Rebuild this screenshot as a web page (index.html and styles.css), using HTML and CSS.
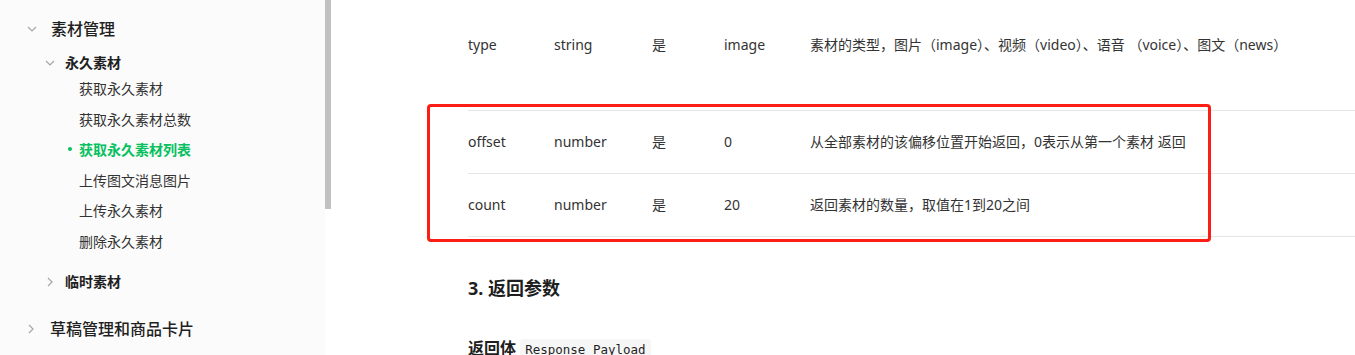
FILE: index.html
```html
<!DOCTYPE html>
<html lang="zh-CN">
<head>
  <meta charset="UTF-8" />
  <title>获取永久素材列表</title>
  <link rel="stylesheet" href="styles.css">
</head>
<body>
  <!-- Barra lateral de navegación -->
  <aside class="sidebar">
    <div class="group-title">
      <span class="chev"><svg width="10" height="6" viewBox="0 0 10 6"><polyline points="1,1 5,5 9,1" /></svg></span>
      素材管理
    </div>
    <div class="sub-title">
      <span class="chev"><svg width="10" height="6" viewBox="0 0 10 6"><polyline points="1,1 5,5 9,1" /></svg></span>
      永久素材
    </div>
    <ul class="items">
      <li>获取永久素材</li>
      <li>获取永久素材总数</li>
      <li class="active"><span class="dot"></span>获取永久素材列表</li>
      <li>上传图文消息图片</li>
      <li>上传永久素材</li>
      <li>删除永久素材</li>
    </ul>
    <div class="sub-title closed">
      <span class="chev"><svg width="6" height="10" viewBox="0 0 6 10"><polyline points="1,1 5,5 1,9" /></svg></span>
      临时素材
    </div>
    <div class="group-title closed">
      <span class="chev"><svg width="6" height="10" viewBox="0 0 6 10"><polyline points="1,1 5,5 1,9" /></svg></span>
      草稿管理和商品卡片
    </div>
  </aside>

  <!-- Barra de scroll -->
  <div class="scroll-track"><div class="scroll-thumb"></div></div>

  <!-- Contenido principal -->
  <main class="content">
    <div class="params">
      <div class="row first">
        <span>type</span><span>string</span><span>是</span><span>image</span>
        <span>素材的类型，图片（image）、视频（video）、语音 （voice）、图文（news）</span>
      </div>
      <div class="highlight">
        <div class="row">
          <span>offset</span><span>number</span><span>是</span><span>0</span>
          <span>从全部素材的该偏移位置开始返回，0表示从第一个素材 返回</span>
        </div>
        <div class="row">
          <span>count</span><span>number</span><span>是</span><span>20</span>
          <span>返回素材的数量，取值在1到20之间</span>
        </div>
      </div>
    </div>

    <h3 class="section-title">3. 返回参数</h3>
    <h4 class="sub-heading">返回体 <code>Response Payload</code></h4>
  </main>
</body>
</html>
```

FILE: styles.css
```css
/* Fuentes y colores base */
:root {
  --text: #333;
  --title: #1f1f1f;
  --line: #e6e6e6;
  --green: #07c160;
  --red: #fa1e14;
  --font-sans: "Noto Sans", "Noto Sans CJK SC", sans-serif;
}

html, body {
  margin: 0;
  height: 100%;
}
body {
  display: flex;
  overflow: hidden;
  background: #fff;
  color: var(--text);
  font-family: var(--font-sans);
}

/* Sidebar */
.sidebar {
  width: 325px;
  flex-shrink: 0;
  background: #fbfbfb;
  padding-top: 17px;
  box-sizing: border-box;
}
.chev {
  display: inline-flex;
  justify-content: center;
  align-items: center;
  width: 16px;
}
.chev polyline {
  fill: none;
  stroke: #a6a6a6;
  stroke-width: 1.2;
}
.group-title {
  display: flex;
  align-items: center;
  padding-left: 24px;
  font-size: 16px;
  line-height: 24px;
  font-weight: 500;
  color: var(--title);
}
.group-title .chev {
  margin-right: 11px;
}
.group-title.closed {
  margin-top: 24px;
  padding-left: 23px;
}
.sub-title {
  display: flex;
  align-items: center;
  margin-top: 11px;
  padding-left: 42px;
  font-size: 14px;
  line-height: 22px;
  font-weight: 700;
  color: var(--title);
}
.sub-title .chev {
  margin-right: 7px;
}
.sub-title.closed {
  margin-top: 15px;
}
.items {
  list-style: none;
  margin: -1px 0 0;
  padding: 0;
}
.items li {
  display: flex;
  align-items: center;
  height: 30.5px;
  padding-left: 79px;
  font-size: 14px;
  color: var(--text);
}
.items li.active {
  color: var(--green);
  font-weight: 700;
}
.dot {
  width: 4px;
  height: 4px;
  border-radius: 50%;
  background: var(--green);
  margin-left: -11px;
  margin-right: 7px;
}

/* Scroll */
.scroll-track {
  width: 6px;
  flex-shrink: 0;
}
.scroll-thumb {
  height: 209px;
  background: #c1c1c1;
}

/* Contenido */
.content {
  flex: 1;
  padding-left: 137px;
}
.params {
  font-size: 14px;
  line-height: 22px;
}
.row {
  display: grid;
  grid-template-columns: 86px 98px 72px 86px 1fr;
  height: 63px;
  padding: 20px 0;
  box-sizing: border-box;
  border-bottom: 1px solid var(--line);
  white-space: nowrap;
}
.row.first {
  height: 111px;
  padding: 34px 0 0;
}

/* Recuadro rojo de la anotación */
.highlight {
  position: relative;
}
.highlight::after {
  content: "";
  position: absolute;
  top: -7px;
  bottom: -5px;
  left: -41px;
  width: 784px;
  border: 3px solid var(--red);
  border-radius: 4px;
  box-sizing: border-box;
}

.section-title {
  margin: 38px 0 0;
  font-size: 18px;
  line-height: 26px;
  font-weight: 700;
  color: var(--title);
}
.sub-heading {
  margin: 35px 0 0;
  font-size: 16px;
  line-height: 24px;
  font-weight: 700;
  color: var(--title);
}
.sub-heading code {
  font-family: "DejaVu Sans Mono", monospace;
  font-size: 12.5px;
  font-weight: 400;
  background: #f6f6f6;
  padding: 3px 5px;
  border-radius: 3px;
}
```
